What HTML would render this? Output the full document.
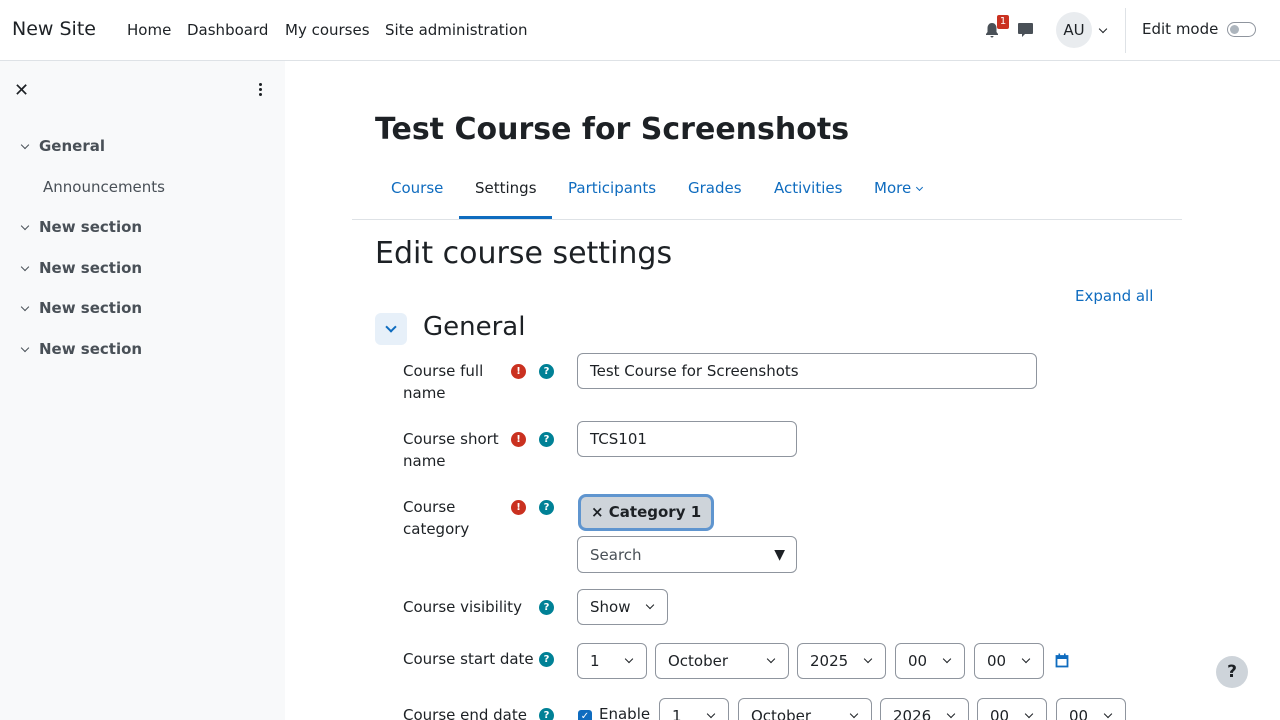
<!DOCTYPE html>
<html style="height:720px;overflow:hidden"><head><meta charset="utf-8"><style>
*{box-sizing:border-box;margin:0;padding:0}
body{width:1280px;height:720px;overflow:hidden;position:relative;font-family:"DejaVu Sans","Liberation Sans",sans-serif;color:#1d2125;background:#fff;font-size:15px}
.a{position:absolute;white-space:nowrap}
.nav{position:absolute;left:0;top:0;width:1280px;height:61px;border-bottom:1px solid #dee2e6;background:#fff}
.drawer{position:absolute;left:0;top:61px;width:285px;height:659px;background:#f8f9fa}
.sec{font-weight:bold;color:#495057;font-size:15px}
.chev{display:inline-block;width:6px;height:6px;border-right:1.5px solid #495057;border-bottom:1.5px solid #495057;transform:rotate(45deg)}
.tab{color:#0f6cbf;font-size:15px}
.lbl{font-size:15px;line-height:22px}
.ic{position:absolute;width:15px;height:15px;border-radius:50%;color:#fff;font-size:10px;font-weight:bold;text-align:center;line-height:15px}
.r{background:#ca3120}.h{background:#008196}
.inp{position:absolute;border:1px solid #8f959e;border-radius:6px;background:#fff;font-size:15px;padding-left:12px;display:flex;align-items:center}
.sel{position:absolute;border:1px solid #8f959e;border-radius:6px;height:36px;font-size:15px;padding-left:12px;display:flex;align-items:center}
.sel .chev{position:absolute;right:14px;top:12px;border-color:#1d2125;width:6px;height:6px;border-width:0 1.3px 1.3px 0}
</style></head><body>
<div class="nav">
<div class="a" style="left:12px;top:18px;font-size:19px">New Site</div>
<div class="a" style="left:127px;top:21px">Home</div>
<div class="a" style="left:187px;top:21px">Dashboard</div>
<div class="a" style="left:285px;top:21px">My courses</div>
<div class="a" style="left:385px;top:21px">Site administration</div>
<svg class="a" style="left:984px;top:22px" width="16" height="16" viewBox="0 0 16 16"><path d="M8 1c-3 0-4.5 2.5-4.5 5v4L2 12v1h12v-1l-1.5-2V6C12.5 3.5 11 1 8 1zM6.5 14a1.5 1.5 0 0 0 3 0z" fill="#495057"/></svg>
<div class="a" style="left:997px;top:15px;width:12px;height:14px;background:#ca3120;color:#fff;font-size:10px;text-align:center;line-height:14px;border-radius:2px">1</div>
<svg class="a" style="left:1017px;top:22px" width="17" height="16" viewBox="0 0 17 16"><path d="M2 1h13a1 1 0 0 1 1 1v9a1 1 0 0 1-1 1H8l-3 3v-3H2a1 1 0 0 1-1-1V2a1 1 0 0 1 1-1z" fill="#495057"/></svg>
<div class="a" style="left:1056px;top:12px;width:36px;height:36px;border-radius:50%;background:#e9ecef;text-align:center;line-height:36px;font-size:15px">AU</div>
<span class="chev a" style="left:1100px;top:26px;border-color:#1d2125;border-width:0 1.3px 1.3px 0"></span>
<div class="a" style="left:1125px;top:8px;width:1px;height:45px;background:#dee2e6"></div>
<div class="a" style="left:1142px;top:20px">Edit mode</div>
<div class="a" style="left:1227px;top:22px;width:29px;height:15px;border:1px solid #8f959e;border-radius:8px"><div style="position:absolute;left:2px;top:2px;width:9px;height:9px;border-radius:50%;background:#adb5bd"></div></div>
</div>
<div class="drawer">
<div class="a" style="left:14px;top:19px;font-size:18px;font-weight:bold">✕</div>
<div class="a" style="left:259px;top:22px;width:4px"><div style="width:3px;height:3px;background:#1d2125;border-radius:50%;margin-bottom:2px"></div><div style="width:3px;height:3px;background:#1d2125;border-radius:50%;margin-bottom:2px"></div><div style="width:3px;height:3px;background:#1d2125;border-radius:50%"></div></div>
<span class="chev a" style="left:22px;top:81px"></span><div class="a sec" style="left:39px;top:76px">General</div>
<div class="a" style="left:43px;top:117px;color:#495057">Announcements</div>
<span class="chev a" style="left:22px;top:162px"></span><div class="a sec" style="left:39px;top:157px">New section</div>
<span class="chev a" style="left:22px;top:203px"></span><div class="a sec" style="left:39px;top:198px">New section</div>
<span class="chev a" style="left:22px;top:243px"></span><div class="a sec" style="left:39px;top:238px">New section</div>
<span class="chev a" style="left:22px;top:284px"></span><div class="a sec" style="left:39px;top:279px">New section</div>
</div>
<div class="a" style="left:375px;top:112px;font-size:30px;font-weight:bold">Test Course for Screenshots</div>
<div class="a tab" style="left:391px;top:179px">Course</div>
<div class="a" style="left:475px;top:179px">Settings</div>
<div class="a" style="left:459px;top:216px;width:93px;height:3px;background:#0f6cbf"></div>
<div class="a tab" style="left:568px;top:179px">Participants</div>
<div class="a tab" style="left:688px;top:179px">Grades</div>
<div class="a tab" style="left:774px;top:179px">Activities</div>
<div class="a tab" style="left:874px;top:179px">More</div>
<span class="chev a" style="left:917px;top:185px;width:5px;height:5px;border-color:#0f6cbf;border-width:0 1.3px 1.3px 0"></span>
<div class="a" style="left:352px;top:219px;width:830px;height:1px;background:#dee2e6"></div>
<div class="a" style="left:375px;top:236px;font-size:30px">Edit course settings</div>
<div class="a tab" style="left:1075px;top:287px">Expand all</div>
<div class="a" style="left:375px;top:313px;width:32px;height:32px;border-radius:6px;background:#e7f0f9"><span class="chev" style="position:absolute;left:12px;top:10px;width:8px;height:8px;border-color:#0f6cbf;border-width:0 2px 2px 0"></span></div>
<div class="a" style="left:423px;top:312px;font-size:26px">General</div>

<div class="a lbl" style="left:403px;top:360px">Course full<br>name</div>
<div class="ic r" style="left:511px;top:364px">!</div><div class="ic h" style="left:539px;top:364px">?</div>
<div class="inp" style="left:577px;top:353px;width:460px;height:36px">Test Course for Screenshots</div>

<div class="a lbl" style="left:403px;top:428px">Course short<br>name</div>
<div class="ic r" style="left:511px;top:432px">!</div><div class="ic h" style="left:539px;top:432px">?</div>
<div class="inp" style="left:577px;top:421px;width:220px;height:36px">TCS101</div>

<div class="a lbl" style="left:403px;top:496px">Course<br>category</div>
<div class="ic r" style="left:511px;top:500px">!</div><div class="ic h" style="left:539px;top:500px">?</div>
<div class="a" style="left:578px;top:494px;width:136px;height:37px;border:3px solid #5f95cf;border-radius:8px;background:#ced4da;font-weight:bold;font-size:15px;padding-left:10px;line-height:31px">× Category 1</div>
<div class="inp" style="left:577px;top:536px;width:220px;height:37px;color:#495057">Search<span style="position:absolute;right:11px;color:#1d2125;font-size:14px">▼</span></div>

<div class="a lbl" style="left:403px;top:596px">Course visibility</div>
<div class="ic h" style="left:539px;top:600px">?</div>
<div class="sel" style="left:577px;top:589px;width:91px">Show<span class="chev"></span></div>

<div class="a lbl" style="left:403px;top:648px">Course start date</div>
<div class="ic h" style="left:539px;top:652px">?</div>
<div class="sel" style="left:577px;top:643px;width:70px">1<span class="chev"></span></div>
<div class="sel" style="left:655px;top:643px;width:134px">October<span class="chev"></span></div>
<div class="sel" style="left:797px;top:643px;width:89px">2025<span class="chev"></span></div>
<div class="sel" style="left:895px;top:643px;width:70px">00<span class="chev"></span></div>
<div class="sel" style="left:974px;top:643px;width:70px">00<span class="chev"></span></div>
<svg class="a" style="left:1055px;top:653px" width="14" height="15" viewBox="0 0 14 15"><rect x="1.5" y="3" width="11" height="10.5" fill="none" stroke="#0f6cbf" stroke-width="1.8"/><rect x="1.5" y="3" width="11" height="3" fill="#0f6cbf"/><rect x="3.5" y="0.5" width="1.6" height="3" fill="#0f6cbf"/><rect x="9" y="0.5" width="1.6" height="3" fill="#0f6cbf"/></svg>

<div class="a lbl" style="left:403px;top:704px">Course end date</div>
<div class="ic h" style="left:539px;top:708px">?</div>
<div class="a" style="left:578px;top:710px;width:14px;height:14px;background:#0f6cbf;border-radius:3px;color:#fff;font-size:10px;text-align:center;line-height:14px">✓</div>
<div class="a" style="left:599px;top:705px">Enable</div>
<div class="sel" style="left:659px;top:698px;width:70px">1<span class="chev"></span></div>
<div class="sel" style="left:738px;top:698px;width:134px">October<span class="chev"></span></div>
<div class="sel" style="left:880px;top:698px;width:89px">2026<span class="chev"></span></div>
<div class="sel" style="left:977px;top:698px;width:70px">00<span class="chev"></span></div>
<div class="sel" style="left:1056px;top:698px;width:70px">00<span class="chev"></span></div>

<div class="a" style="left:1216px;top:656px;width:32px;height:32px;border-radius:50%;background:#ced4da;text-align:center;line-height:32px;font-size:17px;font-weight:bold">?</div>
</body></html>
